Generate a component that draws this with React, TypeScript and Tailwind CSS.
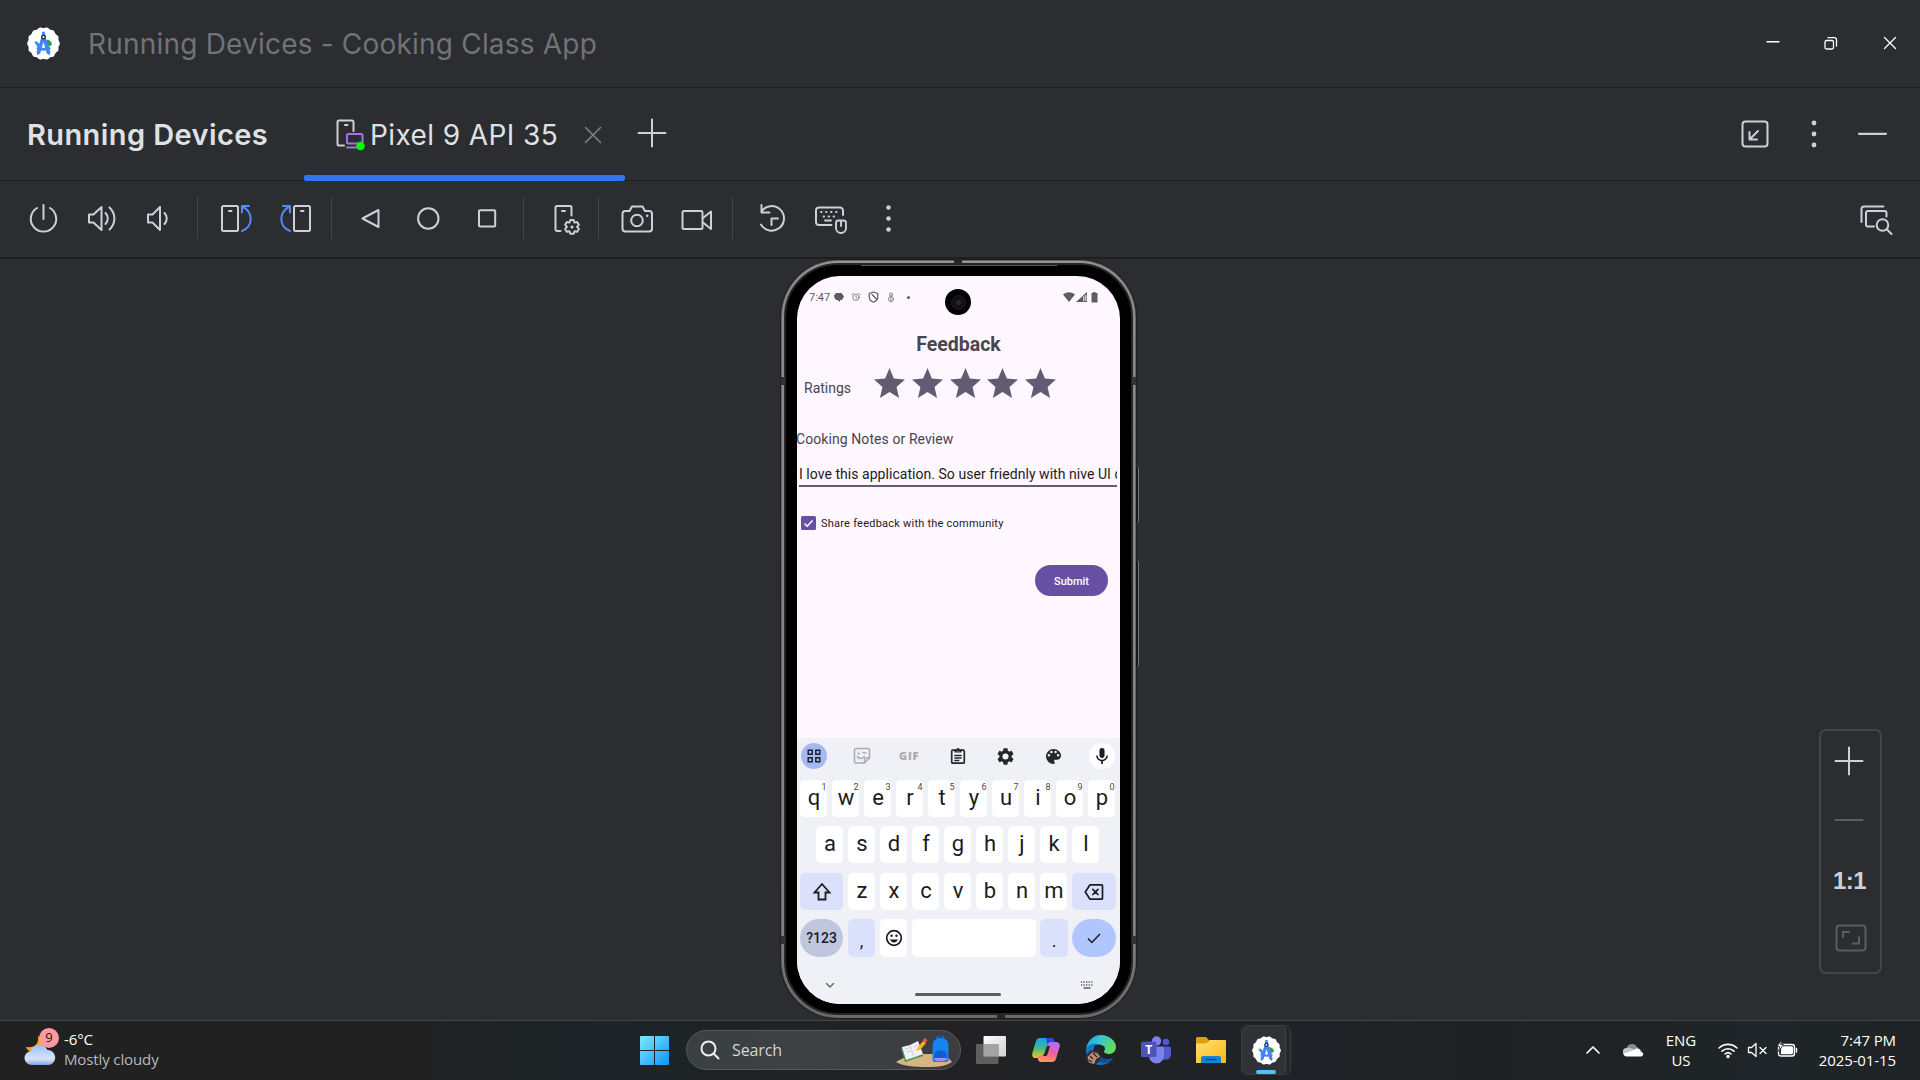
import React from "react";

type IconProps = {
  w: number;
  h: number;
  className?: string;
  sw?: number;
  stroke?: string;
  children: React.ReactNode;
};

function Icon({ w, h, className = "", sw = 2, stroke = "#ced0d6", children }: IconProps) {
  return (
    <svg
      width={w}
      height={h}
      viewBox={`0 0 ${w} ${h}`}
      fill="none"
      stroke={stroke}
      strokeWidth={sw}
      strokeLinecap="round"
      strokeLinejoin="round"
      className={`shrink-0 ${className}`}
    >
      {children}
    </svg>
  );
}

function scallop(cx: number, cy: number, r: number, amp: number, n: number) {
  const pts: string[] = [];
  for (let i = 0; i < 120; i++) {
    const t = (i / 120) * Math.PI * 2;
    const rr = r + amp * Math.cos(n * t);
    pts.push(`${(cx + rr * Math.cos(t)).toFixed(2)},${(cy + rr * Math.sin(t)).toFixed(2)}`);
  }
  return `M${pts.join("L")}Z`;
}

const SCALLOP = scallop(16, 16, 15.4, 0.5, 14);

function StudioLogo({ className = "", size }: { className?: string; size: number }) {
  return (
    <svg width={size} height={size} viewBox="0 0 32 32" className={`shrink-0 ${className}`}>
      <path d={SCALLOP} fill="#fff" />
      <path d="M18.500 12.500c3-.5 5.500 1.500 5.800 5L20.500 19z" fill="#2f9e44" />
      <path d="M7 14.500l2.400-.8 3 3.500-1.200 3.400z" fill="#4285f4" />
      <path d="M14.500 8h3l5.200 16.500-.8 3-2.700-1.800L16 14.500l-3.200 11.200-2.700 1.800-.8-3z" fill="#4285f4" />
      <path d="M9.500 20.200c4.300 2 8.700 2 13 0" fill="none" stroke="#4285f4" strokeWidth="2.600" />
      <path d="M14.800 4.500h2.400l.8 5h-4z" fill="#4285f4" />
      <circle cx="16" cy="9.800" r="1.700" fill="#fff" stroke="#1c2b3a" strokeWidth="1.300" />
    </svg>
  );
}

const Sep = ({ className = "" }: { className?: string }) => (
  <div className={`h-[42px] w-px shrink-0 bg-[#43454a] ${className}`} />
);

function TitleBar() {
  return (
    <header className="flex h-[88px] shrink-0 items-center border-b border-[#1e1f22]">
      <StudioLogo size={33} className="ml-[27px]" />
      <h1 className="ml-[28px] text-[28px] whitespace-nowrap tracking-[0.2px] text-[#6f737a]">
        Running Devices - Cooking Class App
      </h1>
      <div className="ml-auto flex items-center pr-[22px] pb-[2px]">
        <Icon w={16} h={16} sw={1.4} stroke="#fff" className="mr-[42px]">
          <path d="M2 6.700h12" />
        </Icon>
        <Icon w={16} h={16} sw={1.300} stroke="#fff" className="mr-[43px]">
          <rect x="2" y="5.500" width="8.500" height="8.500" rx="1.500" />
          <path d="M5 2.700h6.500a2 2 0 0 1 2 2V11" />
        </Icon>
        <Icon w={16} h={16} sw={1.300} stroke="#fff">
          <path d="M2.500 2.500l11 11M13.500 2.500l-11 11" />
        </Icon>
      </div>
    </header>
  );
}

function TabBar() {
  return (
    <div className="flex h-[93px] shrink-0 items-center border-b border-[#1e1f22]">
      <h2 className="ml-[27px] w-[277px] pt-[1px] text-[29px] font-semibold whitespace-nowrap tracking-[0.4px] text-[#dfe1e5]">
        Running Devices
      </h2>
      <div className="relative flex h-full w-[321px] items-center">
        <Icon w={32} h={34} className="ml-[31px] mt-[2px]">
          <path d="M9 27.500H4a1.500 1.500 0 0 1-1.500-1.500V4A1.500 1.500 0 0 1 4 2.500h13A1.500 1.500 0 0 1 18.500 4v9" />
          <path d="M10 7h2.500" />
          <rect x="12" y="16" width="15.500" height="9.500" rx="1.500" stroke="#a571e6" />
          <path d="M12 29.500h10" stroke="#a571e6" />
          <circle cx="25.500" cy="28" r="4.300" fill="#00ff00" stroke="none" />
        </Icon>
        <span className="ml-[3px] pt-[2px] text-[28px] whitespace-nowrap tracking-[0.4px] text-[#dfe1e5]">Pixel 9 API 35</span>
        <Icon w={20} h={20} sw={1.600} stroke="#7c8087" className="absolute left-[279px] top-[37px]">
          <path d="M2.500 2.500l15 15M17.500 2.500l-15 15" />
        </Icon>
        <div className="absolute -bottom-px left-0 h-[6px] w-full rounded-[2px] bg-[#3574f0]" />
      </div>
      <Icon w={30} h={30} className="mb-[3px] ml-[12px]">
        <path d="M15 1.500v27M1.500 15h27" />
      </Icon>
      <div className="ml-auto flex items-center pr-[32px]">
        <Icon w={30} h={30} className="mr-[36px]">
          <rect x="2.500" y="2.500" width="25" height="25" rx="3" />
          <path d="M18 12l-8.500 8.500M9.500 13v7.500H17" />
        </Icon>
        <Icon w={16} h={30} stroke="none" className="mr-[34px]">
          <g fill="#ced0d6">
            <circle cx="8" cy="4" r="2.400" />
            <circle cx="8" cy="15" r="2.400" />
            <circle cx="8" cy="26" r="2.400" />
          </g>
        </Icon>
        <Icon w={32} h={30} sw={2.200}>
          <path d="M3 14.800h27" />
        </Icon>
      </div>
    </div>
  );
}

function Toolbar() {
  return (
    <div className="flex h-[78px] shrink-0 items-center border-b-2 border-[#1e1f22] pb-[2px]">
      <Icon w={36} h={36} className="ml-[25px]">
        <path d="M18.500 5v14M12 8a12.700 12.700 0 1 0 13 0" />
      </Icon>
      <Icon w={36} h={36} className="ml-[23px]">
        <path d="M5 14.500h4.500l8-7.500v23l-8-7.500H5zM21.500 13c3 3 3 8 0 11M25.500 7.500c6.500 6 6.500 16 0 22" />
      </Icon>
      <Icon w={36} h={36} className="ml-[20px]">
        <path d="M8 14.500h4.500l7.500-7.500v23l-7.500-7.500H8zM24.500 13c3 3 3 8 0 11" />
      </Icon>
      <Sep className="ml-[21px]" />
      <Icon w={36} h={36} className="ml-[20px]">
        <rect x="4" y="6" width="16" height="25" rx="1.500" />
        <path d="M11 11h2.500" />
        <path d="M24 31C35.500 26.500 35.500 12.500 24.500 6.500M24 12.500V6h7" stroke="#548af7" />
      </Icon>
      <Icon w={36} h={36} className="ml-[24px]">
        <rect x="16" y="6" width="16" height="25" rx="1.500" />
        <path d="M23 11h2.500" />
        <path d="M12 31C0.500 26.500 .5 12.500 11.500 6.500M12 12.500V6H5" stroke="#548af7" />
      </Icon>
      <Sep className="ml-[17px]" />
      <Icon w={36} h={36} className="ml-[20px]">
        <path d="M26.500 10v17L10.500 18.500z" />
      </Icon>
      <Icon w={36} h={36} className="ml-[22px]">
        <circle cx="18.300" cy="18.500" r="10.200" />
      </Icon>
      <Icon w={36} h={36} className="ml-[23px]">
        <rect x="10" y="10.300" width="16.200" height="16.200" rx="1" />
      </Icon>
      <Sep className="ml-[18px]" />
      <Icon w={36} h={36} className="ml-[25px]">
        <path d="M11.500 31H8A1.500 1.500 0 0 1 6.500 29.500V7.500A1.500 1.500 0 0 1 8 6h13A1.500 1.500 0 0 1 22.500 7.500v8M13 11h3" />
        <path
          d="M21.300 20h3.400l.8 2.600 2.700-.6 1.700 2.900-1.900 2 1.900 2-1.700 2.900-2.700-.6-.8 2.600h-3.400l-.8-2.600-2.700.6-1.700-2.900 1.900-2-1.900-2 1.700-2.900 2.700.6z"
          strokeWidth="1.900"
        />
        <circle cx="23" cy="27" r="1.600" fill="#ced0d6" stroke="none" />
      </Icon>
      <Sep className="ml-[13px]" />
      <Icon w={36} h={36} className="ml-[20px] mt-px">
        <path d="M6 10h4.500L13 5.500h10.500L26 10h4.200a2.800 2.800 0 0 1 2.800 2.800v14.900a2.800 2.800 0 0 1-2.800 2.800H6.300a2.800 2.800 0 0 1-2.800-2.800V12.800A2.800 2.800 0 0 1 6 10z" />
        <circle cx="18" cy="19.500" r="5.800" />
        <circle cx="28.200" cy="14.800" r="1.300" fill="#ced0d6" stroke="none" />
      </Icon>
      <Icon w={36} h={36} className="ml-[24px] mt-px">
        <rect x="3.500" y="10" width="20" height="18" rx="1.500" />
        <path d="M24 17l8-6.500v17.500l-8-6.500" />
      </Icon>
      <Sep className="ml-[17px]" />
      <Icon w={36} h={36} className="ml-[22px] mt-px">
        <path d="M6.500 10.500a12.300 12.300 0 1 1-.5 13M6.500 4v7.500h8M16.500 24v-6.500H23" />
      </Icon>
      <Icon w={36} h={36} className="ml-[21px] mt-px">
        <path d="M19.500 24H7a3 3 0 0 1-3-3V9.500a3 3 0 0 1 3-3h21a3 3 0 0 1 3 3V14" />
        <path d="M9 11h.6M14 11h.6M19 11h.6M24 11h.6M11.500 15.500h.6M16.500 15.500h.6M21.500 15.500h.6M13 19.500h6" strokeWidth="1.800" />
        <path d="M26.500 19.500h5a2.500 2.500 0 0 1 2.500 2.500v5a5 5 0 0 1-10 0v-5a2.500 2.500 0 0 1 2.500-2.500zM29 20v5" strokeWidth="1.900" />
      </Icon>
      <Icon w={16} h={36} stroke="none" className="ml-[32px]">
        <g fill="#ced0d6">
          <circle cx="8.500" cy="7.500" r="2.300" />
          <circle cx="8.500" cy="18.500" r="2.300" />
          <circle cx="8.500" cy="29.500" r="2.300" />
        </g>
      </Icon>
      <Icon w={36} h={36} className="ml-auto mr-[26px] mt-px">
        <path d="M3.500 21V8A2.500 2.500 0 0 1 6 5.500h19.500" />
        <path d="M16 25.500H10A2 2 0 0 1 8 23.500V12a2 2 0 0 1 2-2h16.500a2 2 0 0 1 2 2v3.500" />
        <circle cx="24.500" cy="24" r="5.800" />
        <path d="M29 28.500l4.500 4.500" />
      </Icon>
    </div>
  );
}

const STAR = "M12 17.270L18.180 21l-1.640-7.030L22 9.240l-7.190-.610L12 2 9.190 8.630 2 9.240l5.460 4.730L5.820 21z";

function Key({ label, hint }: { label: string; hint?: string }) {
  return (
    <div className="relative flex h-[37px] w-[27px] items-center justify-center rounded-[5px] bg-white text-[22px] leading-none text-[#1b1b21]">
      <span className="-mt-[1px] ml-px">{label}</span>
      {hint && <span className="absolute right-[0.500px] top-[2.500px] text-[9px] leading-none text-[#45464f]">{hint}</span>}
    </div>
  );
}

function Keyboard() {
  return (
    <div className="flex h-[266px] flex-col bg-[#f0f0f7]">
      <div className="flex h-9 items-center pl-[4px]">
        <div className="flex size-[26px] items-center justify-center rounded-full bg-[#a3b9f0]">
          <Icon w={14} h={14} sw={1.400} stroke="#1b1f2b">
            <path d="M1.200 1.200h4v4h-4zM8.800 1.200h4v4h-4zM1.200 8.800h4v4h-4zM8.800 8.800h4v4h-4z" strokeLinejoin="miter" />
          </Icon>
        </div>
        <Icon w={18} h={18} sw={1.500} stroke="#aaaaaf" className="ml-[26px]">
          <path d="M11.500 16H3a1.500 1.500 0 0 1-1.500-1.500V3A1.500 1.500 0 0 1 3 1.500h12A1.500 1.500 0 0 1 16.500 3v8l-5 5v-3.500a1.500 1.500 0 0 1 1.500-1.500h3" />
          <path d="M5 6.500h1.500M10 5.500l3 .5M4.500 9.500c1.500 2.500 5 2.500 7 0" />
        </Icon>
        <span className="ml-[28px] w-[21px] font-['Open_Sans'] text-[11px] font-extrabold tracking-[0.800px] text-[#aaaaaf]">
          GIF
        </span>
        <Icon w={16} h={18} sw={1.700} stroke="#26272c" className="ml-[30px]">
          <rect x="1.700" y="3.200" width="12.600" height="13" rx="1" />
          <path d="M5 4.800h6V3.200H9.500a1.500 1.500 0 0 0-3 0H5zM4.800 8.500h6.400M4.800 11h6.400M4.800 13.500h4" strokeWidth="1.300" />
        </Icon>
        <svg width="17" height="17" viewBox="2 2 20 20" className="ml-[31px]" fill="#26272c">
          <path d="M19.140 12.940c.04-.3.060-.610.060-.940s-.02-.640-.07-.940l2.030-1.580c.18-.14.230-.410.120-.610l-1.920-3.320c-.12-.22-.37-.290-.590-.22l-2.390.96c-.5-.38-1.030-.7-1.620-.94l-.36-2.540c-.04-.24-.24-.41-.48-.41h-3.840c-.24 0-.43.17-.47.41l-.36 2.540c-.59.24-1.130.57-1.620.94l-2.390-.96c-.22-.08-.47 0-.59.22L2.740 8.870c-.12.210-.08.470.12.610l2.030 1.580c-.05.3-.09.630-.09.940s.02.640.07.940l-2.030 1.580c-.18.14-.23.410-.12.610l1.920 3.320c.12.220.37.290.59.220l2.390-.96c.5.380 1.030.7 1.620.94l.36 2.540c.05.240.24.410.48.410h3.840c.24 0 .44-.17.47-.41l.36-2.540c.59-.24 1.130-.56 1.620-.94l2.390.96c.22.080.47 0 .59-.22l1.920-3.320c.12-.22.070-.47-.12-.61zM12 15.600A3.600 3.600 0 1 1 12 8.400a3.600 3.600 0 0 1 0 7.200z" />
        </svg>
        <svg width="15" height="15" viewBox="3 3 18 18" className="ml-[32px]" fill="#26272c">
          <path d="M12 3a9 9 0 0 0 0 18c.83 0 1.500-.67 1.500-1.500 0-.39-.15-.74-.39-1.010-.23-.26-.38-.61-.38-.99 0-.83.67-1.500 1.500-1.500H16c2.760 0 5-2.240 5-5 0-4.420-4.030-8-9-8zm-5.500 9a1.500 1.500 0 1 1 0-3 1.500 1.500 0 0 1 0 3zm3-4a1.500 1.500 0 1 1 0-3 1.500 1.500 0 0 1 0 3zm5 0a1.500 1.500 0 1 1 0-3 1.500 1.500 0 0 1 0 3zm3 4a1.500 1.500 0 1 1 0-3 1.500 1.500 0 0 1 0 3z" />
        </svg>
        <div className="ml-[28px] flex size-[26px] items-center justify-center rounded-full bg-white">
          <svg width="12" height="16" viewBox="5 2 14 19" fill="#1b1b21">
            <path d="M12 14c1.660 0 3-1.340 3-3V5a3 3 0 0 0-6 0v6c0 1.660 1.340 3 3 3zm5.300-3c0 3-2.540 5.100-5.300 5.100S6.700 14 6.700 11H5c0 3.410 2.720 6.230 6 6.720V21h2v-3.280c3.280-.48 6-3.300 6-6.720z" />
          </svg>
        </div>
      </div>
      <div className="mt-[6px] flex gap-[5px] pl-[3px]">
        {"qwertyuiop".split("").map((k, i) => (
          <Key key={k} label={k} hint={String((i + 1) % 10)} />
        ))}
      </div>
      <div className="mt-[9px] flex gap-[5px] pl-[19px]">
        {"asdfghjkl".split("").map((k) => (
          <Key key={k} label={k} />
        ))}
      </div>
      <div className="mt-[10px] flex gap-[5px] pl-[3px]">
        <div className="flex w-[43px] items-center justify-center rounded-[5px] bg-[#dce1fb]">
          <Icon w={20} h={20} sw={1.800} stroke="#1b1b21">
            <path d="M10 2l7.500 8.500h-4V17.500h-7v-7h-4z" strokeLinejoin="miter" />
          </Icon>
        </div>
        {"zxcvbnm".split("").map((k) => (
          <Key key={k} label={k} />
        ))}
        <div className="flex w-[44px] items-center justify-center rounded-[5px] bg-[#dce1fb]">
          <Icon w={20} h={18} sw={1.700} stroke="#1b1b21">
            <path d="M6 1.800h11.500a1 1 0 0 1 1 1v12.400a1 1 0 0 1-1 1H6L1.300 9zM8.800 6.300l5.200 5.200M14 6.300l-5.200 5.200" />
          </Icon>
        </div>
      </div>
      <div className="mt-[9px] flex h-[38px] gap-[5px] pl-[3px] text-[#1b1b21]">
        <div className="flex w-[43px] items-center justify-center rounded-full bg-[#c0c6dd] text-[14px] font-medium">?123</div>
        <div className="flex w-[27px] items-center justify-center rounded-[5px] bg-[#dce1fb] pt-1 text-[18px]">,</div>
        <div className="flex w-[27px] items-center justify-center rounded-[5px] bg-white">
          <Icon w={18} h={18} sw={1.700} stroke="#1b1b21">
            <circle cx="9" cy="9" r="7.300" />
            <path d="M5.500 10.800h7a3.700 3.700 0 0 1-7 0z" fill="#1b1b21" strokeWidth=".5" />
            <circle cx="6.500" cy="6.800" r="1.200" fill="#1b1b21" stroke="none" />
            <circle cx="11.500" cy="6.800" r="1.200" fill="#1b1b21" stroke="none" />
          </Icon>
        </div>
        <div className="w-[124px] rounded-[5px] bg-white" />
        <div className="-ml-px flex w-[28px] items-center justify-center rounded-[5px] bg-[#dce1fb] pt-1 text-[18px]">.</div>
        <div className="-ml-px flex w-[44px] items-center justify-center rounded-full bg-[#b0c6ff]">
          <Icon w={16} h={14} sw={1.500} stroke="#1b1b21">
            <path d="M2 7.500l3.800 4L14 3" strokeLinecap="butt" />
          </Icon>
        </div>
      </div>
      <div className="relative flex h-[47px] justify-between px-[26px] pt-[23px]">
        <Icon w={14} h={10} sw={1.300} stroke="#5c5d63">
          <path d="M3.500 3.500L7 7l3.500-3.500" />
        </Icon>
        <Icon w={14} h={10} sw={1.300} stroke="#5c5d63">
          <path d="M1 2h12M1 5h12" strokeDasharray="1.300 1.250" strokeLinecap="butt" />
          <path d="M4 8h6" />
        </Icon>
        <div className="absolute left-[118px] top-[36px] h-[3px] w-[86px] rounded-full bg-[#5d5d63]" />
      </div>
    </div>
  );
}

function StatusBar() {
  return (
    <div className="mt-[13px] flex h-4 items-center pl-[12px] text-[#5e5b61]">
      <span className="w-[25px] text-[11px] leading-none">7:47</span>
      <svg width="10" height="10" viewBox="0 0 10 10" fill="#5e5b61">
        <path d="M2 1h5.500L10 4.500 8 8H6v2L3.500 8H2L.500 6 0 3.500z" />
      </svg>
      <Icon w={10} h={10} sw={0.900} stroke="#77747a" className="ml-[7px]">
        <circle cx="5" cy="5.300" r="3.200" />
        <path d="M.8 2.500l1.500-1.500M9.200 2.500L7.700 1M5 3.800v1.700l1 .8" />
      </Icon>
      <Icon w={11} h={12} sw={1.200} stroke="#5e5b61" className="ml-[7px]">
        <path d="M5.500 1L9.800 2.500V6c0 2.500-1.800 4.200-4.300 5.200C3 10.200 1.200 8.500 1.200 6V2.500zM4 3.500l4.500 4.500" />
      </Icon>
      <Icon w={8} h={11} sw={0.900} stroke="#77747a" className="ml-[8px]">
        <circle cx="4" cy="2.500" r="1.500" />
        <circle cx="4" cy="7" r="2.500" />
        <path d="M4 4v6" />
      </Icon>
      <span className="ml-[12px] size-[3px] rounded-full bg-[#5e5b61]" />
      <svg width="36" height="12" viewBox="0 0 36 12" fill="#5e5b61" className="ml-auto mr-[21px]">
        <path d="M0 3.500a9 9 0 0 1 12 0L6 11zM24 1v10H13z" />
        <path d="M20.800 5.200v5M22.800 4v6" stroke="#fef7ff" strokeWidth="1" />
        <path d="M28.500 2H30V1h2.500v1H34.500v9.500h-6z" />
      </svg>
    </div>
  );
}

function Phone() {
  return (
    <div className="relative ml-[781px] mt-px h-[758px] w-[355px] rounded-[57px] bg-[#666] p-px shadow-[0_0_0_1px_#1f1f21]">
      <div className="absolute left-[355px] top-[206px] h-[57px] w-[3px] rounded-r-sm border-r border-[#777] bg-[#161616]" />
      <div className="absolute left-[355px] top-[300px] h-[107px] w-[3px] rounded-r-sm border-r border-[#777] bg-[#161616]" />
      <div className="h-full rounded-[56px] bg-[linear-gradient(180deg,#96958f,#8c8b89_8%,#828180_88%,#6a6a6a)] p-[2px]">
        <div className="relative h-full rounded-[54px] border-2 border-[#262626] bg-black px-[11px] py-[11px]">
          <div className="absolute left-[75px] top-0 h-px w-[196px] bg-[#575757]" />
          <div className="relative flex h-[728px] w-[323px] flex-col overflow-hidden rounded-[43px] bg-[#fef7ff] font-['Roboto']">
            <StatusBar />
            <h3 className="mt-[28px] text-center text-[19.500px] leading-6 font-bold text-[#49454f]">Feedback</h3>
            <div className="mt-[11px] flex h-[30px] items-start pl-[7px] text-[14px] text-[#49454f]">
              <span className="mt-[10px] w-[70px] leading-5">Ratings</span>
              <div className="flex gap-[6.800px]">
                {[0, 1, 2, 3, 4].map((i) => (
                  <svg key={i} width="31" height="30" viewBox="2 2 20 19" preserveAspectRatio="none" fill="#625b71">
                    <path d={STAR} />
                  </svg>
                ))}
              </div>
            </div>
            <p className="mt-[31px] -ml-px text-[14px] leading-5 tracking-[0.080px] text-[#49454f]">Cooking Notes or Review</p>
            <div className="ml-[2px] mt-[11px] h-[27px] w-[318px] overflow-hidden border-b-2 border-[#625b71] pt-[4px] text-[14px] leading-5 whitespace-nowrap tracking-[0.040px] text-[#1d1b20]">
              I love this application. So user friednly with nive UI d
            </div>
            <div className="mt-[28px] flex h-[16px] items-center pl-[4px]">
              <div className="flex h-[14px] w-[15px] items-center justify-center rounded-[1.500px] bg-[#6750a4]">
                <Icon w={11} h={9} sw={1.500} stroke="#fff">
                  <path d="M1.500 4.500L4.200 7.200 9.500 1.500" strokeLinecap="butt" />
                </Icon>
              </div>
              <span className="ml-[5px] pt-[2px] text-[11px] whitespace-nowrap tracking-[0.230px] text-[#1d1b20]">
                Share feedback with the community
              </span>
            </div>
            <div className="mt-[34px] mr-[12px] flex h-[31px] w-[73px] items-center justify-center self-end rounded-full bg-[#6750a4] pt-[3px] text-[11px] font-medium text-white">
              Submit
            </div>
            <div className="flex-1" />
            <Keyboard />
            <div className="absolute left-[148px] top-[13px] flex size-[26px] items-center justify-center rounded-full bg-black">
              <div className="flex size-[15px] items-center justify-center rounded-full border border-[#1c1c1e] bg-[#111113]">
                <div className="size-[5px] rounded-full bg-[#2a2048]" />
              </div>
            </div>
          </div>
        </div>
      </div>
      <div className="absolute left-[173px] top-0 h-[4px] w-[8px] bg-[#262626]" />
      <div className="absolute left-[216px] bottom-0 h-[4px] w-[8px] bg-[#262626]" />
      <div className="absolute left-0 top-[117px] h-[8px] w-[4px] bg-[#333]" />
      <div className="absolute right-0 top-[117px] h-[8px] w-[4px] bg-[#333]" />
      <div className="absolute left-0 top-[676px] h-[8px] w-[4px] bg-[#333]" />
      <div className="absolute right-0 top-[676px] h-[8px] w-[4px] bg-[#333]" />
    </div>
  );
}

function ZoomPanel() {
  return (
    <div className="mt-[470px] mr-[38px] ml-auto flex h-[245px] w-[63px] flex-col items-center rounded-[7px] border-2 border-[#43454a]">
      <Icon w={30} h={30} className="mt-[15px] mr-[3px]" stroke="#ced0d6">
        <path d="M15 1.500v27M1.500 15h27" />
      </Icon>
      <Icon w={30} h={10} className="mt-[39px] mr-[3px]" stroke="#5a5d63">
        <path d="M1.500 5h27" />
      </Icon>
      <span className="mt-[41px] mr-[2px] font-['Liberation_Sans'] text-[24px] leading-[30px] font-bold tracking-[-0.500px] text-[#ced0d6]">1:1</span>
      <Icon w={32} h={28} className="mt-[28px]" stroke="#5a5d63">
        <rect x="1.500" y="1.500" width="29" height="25" rx="3" />
        <path d="M8 14V8h7M24 12.500v7h-7" strokeLinecap="butt" strokeLinejoin="miter" />
      </Icon>
    </div>
  );
}

function SearchArt() {
  return (
    <svg width="58" height="32" viewBox="0 0 58 32" className="ml-auto mr-[7px] mt-[3px]">
      <path d="M1 26C10 20 20 18 35 18s18 3 22 8c-6 4-12 5-25 5S7 30 1 26z" fill="#d9b384" />
      <path d="M6 12l17-5 5 13-18 6z" fill="#3d9a4b" />
      <path d="M7 11l8-2 8-4 5 13-8 3-9 3z" fill="#f1f0f5" />
      <path d="M15 9l4 13M10 13l4-1M11 16l5-1M19 11l4-2M20 14l5-2" stroke="#c4c4d0" strokeWidth=".8" />
      <path d="M22 15l1-4 5-6 3 2-5 6z" fill="#f6b02c" />
      <path d="M27.500 5l2-3 3 2-2 3z" fill="#f2554b" />
      <path d="M42 3a3.500 3.500 0 0 1 7 0" fill="none" stroke="#1b6fd0" strokeWidth="1.500" />
      <path d="M37.500 10c0-6 4-8 8-8s8 2 8 8v14a2 2 0 0 1-2 2h-12a2 2 0 0 1-2-2z" fill="#1583f0" />
      <path d="M39.500 18c1-5 11-5 12 0v5h-12z" fill="#0d5fd0" />
      <path d="M39.500 22h12v1.500c-2 2-10 2-12 0z" fill="#a98bff" />
    </svg>
  );
}

function Taskbar() {
  return (
    <footer className="flex h-[60px] shrink-0 items-center border-t border-[#434548] bg-[linear-gradient(90deg,#212122_0%,#212122_22%,#1c2528_32%,#202224_38%,#222224_50%,#1f2227_66%,#202123_78%,#1f2528_92%,#202325_100%)] pb-px font-['Open_Sans'] text-white">
      <div className="relative ml-[24px] flex h-full w-[616px] items-center">
        <svg width="34" height="36" viewBox="0 0 34 36">
          <defs>
            <linearGradient id="cloud" x1="0" y1="0" x2="0" y2="1">
              <stop offset="0" stopColor="#9dc0f8" />
              <stop offset=".7" stopColor="#d6e4fb" />
              <stop offset="1" stopColor="#7fa4e6" />
            </linearGradient>
          </defs>
          <path d="M14 4c1 8-3 12-12 11 2 6 12 8 18 1l2-6z" fill="#f5a623" />
          <path d="M8 33a7 7 0 0 1-1-14 9 9 0 0 1 16.500-1A7.500 7.500 0 0 1 24 33z" fill="url(#cloud)" />
        </svg>
        <span className="absolute left-[15px] top-[7px] flex size-5 items-center justify-center rounded-full bg-[#ff99a4] pb-px text-[13px] leading-none text-[#1c1c1c]">
          9
        </span>
        <div className="ml-[6px] pb-[3px] text-[15px] leading-5 whitespace-nowrap">
          <div className="tracking-[-0.100px]">-6°C</div>
          <div className="tracking-[-0.120px] text-[#b9b9b9]">Mostly cloudy</div>
        </div>
      </div>
      <svg width="29" height="29" viewBox="0 0 29 29" className="shrink-0">
        <defs>
          <linearGradient id="win" x1="0" y1="0" x2="1" y2="1">
            <stop offset="0" stopColor="#7cebff" />
            <stop offset="1" stopColor="#1292f6" />
          </linearGradient>
        </defs>
        <path
          d="M1 0h13v14H0V1a1 1 0 0 1 1-1zM15 0h13a1 1 0 0 1 1 1v13H15zM0 15h14v14H1a1 1 0 0 1-1-1zM15 15h14v13a1 1 0 0 1-1 1H15z"
          fill="url(#win)"
        />
      </svg>
      <div className="ml-[17px] flex h-[40px] w-[275px] shrink-0 items-center rounded-full border border-[#56585a] bg-[linear-gradient(90deg,#3a4042,#3f4042_40%,#3b3d40)]">
        <Icon w={20} h={20} stroke="#f0f0f0" sw={2} className="ml-[13px]">
          <circle cx="8.500" cy="8.500" r="7" />
          <path d="M13.500 13.500l5 5" />
        </Icon>
        <span className="ml-[12px] text-[16px] tracking-[-0.100px] text-[#d5d6d7]">Search</span>
        <SearchArt />
      </div>
      <svg width="30" height="28" viewBox="0 0 30 28" className="ml-[15px] shrink-0">
        <defs>
          <linearGradient id="tvw" x1="0" y1="0" x2="1" y2="1">
            <stop offset="0" stopColor="#fff" />
            <stop offset="1" stopColor="#d0d0d0" />
          </linearGradient>
        </defs>
        <rect x="7.500" y="0" width="22.500" height="20.500" rx="1" fill="url(#tvw)" />
        <rect x="0" y="8" width="22.500" height="20" rx="1" fill="#666" fillOpacity=".9" />
        <path d="M7.500 8h15v12.500h-15z" fill="#a4a4a4" />
      </svg>
      <svg width="28" height="26" viewBox="0 0 28 26" className="ml-[26px] shrink-0">
        <defs>
          <linearGradient id="cpA" x1="0" y1="0" x2="0" y2="1">
            <stop offset="0" stopColor="#18a0f0" />
            <stop offset=".5" stopColor="#3bb98a" />
            <stop offset="1" stopColor="#f2c811" />
          </linearGradient>
          <linearGradient id="cpB" x1=".6" y1="0" x2="0.300" y2="1">
            <stop offset="0" stopColor="#b46cf5" />
            <stop offset=".5" stopColor="#f0609a" />
            <stop offset="1" stopColor="#fb9c52" />
          </linearGradient>
        </defs>
        <path d="M8 1h11c2 0 2.500 1.500 3 3l1 3h-4c-2 0-3 1-3.500 3L12 19c-.5 1.500-1.500 2-3 2H4c-3 0-4.500-2-3.600-5L4 4c.7-2 2-3 4-3z" fill="url(#cpA)" />
        <path d="M14 1h5c2 0 2.500 1.500 3 3l1 3h-4c-2 0-3 .5-3.500 2z" fill="#1c4fd8" />
        <path d="M20 25H9c-2 0-2.500-1-3-2.500L5.500 19H9c2 0 3-1 3.500-3L16 7c.5-1.500 1.500-2 3-2h5c3 0 4.500 2 3.600 5L24 22c-.7 2-2 3-4 3z" fill="url(#cpB)" />
        <path d="M12.500 16L15 9h3l-2.500 8c-.5 1.500-1 2-2 2H10c1.500 0 2-1.500 2.500-3z" fill="#23232a" />
      </svg>
      <svg width="30" height="30" viewBox="0 0 30 30" className="ml-[26px] shrink-0">
        <defs>
          <linearGradient id="edA" x1="0" y1="0" x2="1" y2=".4">
            <stop offset="0" stopColor="#1f9fe0" />
            <stop offset=".5" stopColor="#35c5d8" />
            <stop offset="1" stopColor="#63dc5a" />
          </linearGradient>
        </defs>
        <path d="M0 15C1 6 7 0 15 0s15 6 15 12c0 4-3 7-7 7-3 0-5-1-5-2.500 0-1 1-1.500 1-3 0-2-3-4-7-4-5 0-11 2-12 5.500z" fill="url(#edA)" />
        <path d="M0 15c1-5 6-7 11-6-4 2-4 6-2 11 2 4 6 6 10 6 3 0 6-1 8-3-2 4-7 7-12 7C6 30 0 23 0 15z" fill="#1375c9" />
        <path d="M12 15c0 6 5 9 9 9 3 0 5-1 6-1-1 3-7 6-11 5-6-2-7-10-4-13z" fill="#0e4f98" />
        <circle cx="7.500" cy="22.500" r="7.200" fill="#33302f" />
        <path d="M1.500 22l5-5 5 1.500 2.500 3-4 2.500-2 5-5-1.500z" fill="#b98f84" />
        <path d="M4 21l3 3M7 18l4 4M3 25l3 2" stroke="#3a2420" strokeWidth="1.300" />
      </svg>
      <svg width="30" height="28" viewBox="0 0 30 28" className="ml-[25px] shrink-0">
        <circle cx="15.500" cy="5" r="4.700" fill="#7b83eb" />
        <circle cx="25" cy="6" r="3.300" fill="#5059c9" />
        <path d="M20 10.500h8.500a1.500 1.500 0 0 1 1.500 1.500v6.500a5.500 5.500 0 0 1-9 4z" fill="#5059c9" />
        <path d="M9 10.500h12.500a1.500 1.500 0 0 1 1.500 1.500v8a7.500 7.500 0 0 1-15 0z" fill="#7b83eb" />
        <rect x="0" y="5.500" width="15.500" height="15.500" rx="1.500" fill="#4b53bc" />
        <text x="7.700" y="17.500" textAnchor="middle" fontSize="12" fontWeight="700" fill="#fff" fontFamily="Open Sans">
          T
        </text>
      </svg>
      <svg width="30" height="26" viewBox="0 0 30 26" className="ml-[25px] shrink-0">
        <defs>
          <linearGradient id="fld" x1="0" y1="0" x2="1" y2="1">
            <stop offset="0" stopColor="#ffe07a" />
            <stop offset="1" stopColor="#fbb90e" />
          </linearGradient>
        </defs>
        <path d="M0 8V1.500A1.500 1.500 0 0 1 1.500 0H10l3 3-3 5z" fill="#e0a00c" />
        <path d="M0 6.500h10L13.500 3H29a1 1 0 0 1 1 1v22H0z" fill="url(#fld)" />
        <path d="M5 26v-5a2 2 0 0 1 2-2h16a2 2 0 0 1 2 2v5z" fill="#1583d8" />
        <path d="M9.500 22.500h11" stroke="#0a4f94" strokeWidth="1.500" />
      </svg>
      <div className="ml-[15px] flex h-[50px] w-[50px] shrink-0 rounded-[6px] border border-[#393b3e] bg-[#26282b]">
        <div className="relative flex h-full w-[44px] items-center justify-center rounded-[5px] border-r border-[#414346] bg-[#303236]">
          <StudioLogo size={29} className="ml-[5px]" />
          <span className="absolute bottom-0 left-[14px] h-[4px] w-[20px] rounded-full bg-[#4cc2ff]" />
        </div>
      </div>
      <div className="ml-auto flex items-center pr-[24px] text-[15px] leading-[21px]">
        <Icon w={16} h={16} sw={1.700} stroke="#fff">
          <path d="M2 11l6-6 6 6" />
        </Icon>
        <svg width="21" height="14" viewBox="0 0 21 14" className="ml-[22px]">
          <path d="M4 9a5.500 5.500 0 0 1 10-5l5 4z" fill="#8b8b8b" />
          <path d="M3 13a4 4 0 0 1 1.500-8c3-1 6 1 9 4z" fill="#c4c4c4" />
          <path d="M3.500 13.500C1.500 13.500.5 12 1 10.500 5 9 9 8 13 5.500c3.500 0 4 1 4.500 3 3 .5 4 4 .5 5z" fill="#fff" />
        </svg>
        <div className="ml-[21px] w-[32px] pt-px text-center text-[15px]">
          <div>ENG</div>
          <div className="-mt-px">US</div>
        </div>
        <Icon w={22} h={18} sw={1.600} stroke="#fff" className="ml-[20px]">
          <path d="M2 7a13 13 0 0 1 18 0M5 10.200a8.700 8.700 0 0 1 12 0M8 13a4.500 4.500 0 0 1 6 0" />
          <circle cx="11" cy="15.500" r="1.700" fill="#fff" stroke="none" />
        </Icon>
        <Icon w={20} h={16} sw={1.300} stroke="#fff" className="ml-[8px]">
          <path d="M1.500 5.500h3L9 1.500v13l-4.500-4h-3zM13 5.500l6 6M19 5.500l-6 6" />
        </Icon>
        <Icon w={22} h={18} sw={1.400} stroke="#fff" className="mb-[2px] ml-[9px]">
          <rect x="2.500" y="4.500" width="16" height="11.500" rx="2.500" />
          <path d="M6 7h9.500a1 1 0 0 1 1 1v4.500a1 1 0 0 1-1 1h-10z" fill="#fff" />
          <path d="M20.500 8.500v3.500" />
          <path d="M5.500 0L1 6.500h2.700L2.500 11.500l5-7H5z" fill="#fff" stroke="#202325" strokeWidth=".8" />
        </Icon>
        <div className="ml-[16px] w-[82px] pt-px text-right whitespace-nowrap tracking-[-0.100px]">
          <div>7:47 PM</div>
          <div className="-mt-px">2025-01-15</div>
        </div>
      </div>
    </footer>
  );
}

export default function App() {
  return (
    <div className="flex h-[1080px] w-[1920px] flex-col overflow-hidden bg-[#2b2d30] font-['Inter']">
      <TitleBar />
      <TabBar />
      <Toolbar />
      <main className="flex min-h-0 flex-1 items-start overflow-hidden">
        <Phone />
        <ZoomPanel />
      </main>
      <Taskbar />
    </div>
  );
}
